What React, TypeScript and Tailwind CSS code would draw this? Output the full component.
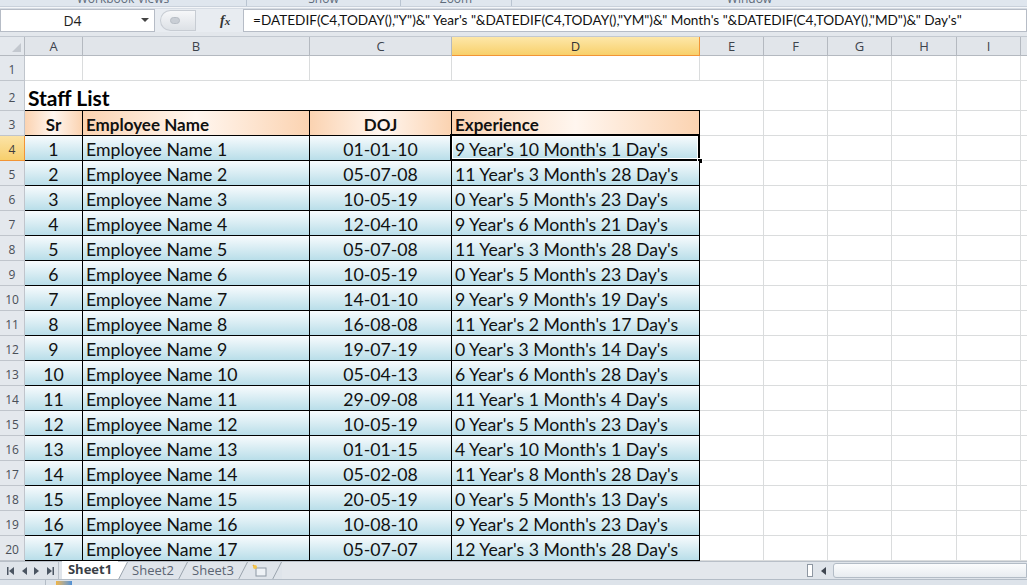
import React from "react";

const COLS = [
  { key: "A", w: "w-[58px]" },
  { key: "B", w: "w-[227px]" },
  { key: "C", w: "w-[142px]" },
  { key: "D", w: "w-[248px]" },
  { key: "E", w: "w-[64px]" },
  { key: "F", w: "w-[64px]" },
  { key: "G", w: "w-[64px]" },
  { key: "H", w: "w-[65px]" },
  { key: "I", w: "w-[64px]" },
  { key: "J", w: "w-[40px]" },
];

const STAFF = [
  ["01-01-10", "9 Year's 10 Month's 1 Day's"],
  ["05-07-08", "11 Year's 3 Month's 28 Day's"],
  ["10-05-19", "0 Year's 5 Month's 23 Day's"],
  ["12-04-10", "9 Year's 6 Month's 21 Day's"],
  ["05-07-08", "11 Year's 3 Month's 28 Day's"],
  ["10-05-19", "0 Year's 5 Month's 23 Day's"],
  ["14-01-10", "9 Year's 9 Month's 19 Day's"],
  ["16-08-08", "11 Year's 2 Month's 17 Day's"],
  ["19-07-19", "0 Year's 3 Month's 14 Day's"],
  ["05-04-13", "6 Year's 6 Month's 28 Day's"],
  ["29-09-08", "11 Year's 1 Month's 4 Day's"],
  ["10-05-19", "0 Year's 5 Month's 23 Day's"],
  ["01-01-15", "4 Year's 10 Month's 1 Day's"],
  ["05-02-08", "11 Year's 8 Month's 28 Day's"],
  ["20-05-19", "0 Year's 5 Month's 13 Day's"],
  ["10-08-10", "9 Year's 2 Month's 23 Day's"],
  ["05-07-07", "12 Year's 3 Month's 28 Day's"],
];

const FORMULA = `=DATEDIF(C4,TODAY(),"Y")&" Year's "&DATEDIF(C4,TODAY(),"YM")&" Month's "&DATEDIF(C4,TODAY(),"MD")&" Day's"`;

const cellFont = "font-['Lato',_'Liberation_Sans',_sans-serif]";
const uiFont = "font-['Open_Sans',_'Liberation_Sans',_sans-serif]";

function RowHead({ n, h, active }: { n: number; h: string; active?: boolean }) {
  return (
    <div
      className={`w-[25px] ${h} shrink-0 flex items-center justify-center pt-[4px] text-[12px] border-r border-b ${
        active
          ? "bg-gradient-to-b from-[#fbe3a6] to-[#f7cf6c] border-[#f29436] text-[#3c3c3c]"
          : "bg-[#e4e8ed] border-[#c0c5cc] text-[#4a4f58]"
      } ${uiFont}`}
    >
      {n}
    </div>
  );
}

function EmptyCells({ from, h }: { from: number; h: string }) {
  return (
    <>
      {COLS.slice(from).map((c) => (
        <div key={c.key} className={`${c.w} ${h} shrink-0 border-r border-b border-[#dadcdd]`} />
      ))}
    </>
  );
}

export default function App() {
  const dataCell =
    "shrink-0 h-[25px] pt-[3px] border-r border-b border-black bg-gradient-to-b from-[#f7fbfd] to-[#b9dee9] flex items-center text-[17.7px] text-[#111] leading-none";
  const headCell =
    "shrink-0 h-[25px] pt-[3px] border-r border-b border-black bg-gradient-to-r from-[#fbd3b1] via-[#fff6ef] to-[#fbd3b1] flex items-center text-[17px] font-bold text-[#111] leading-none";

  return (
    <div className="w-[1027px] h-[585px] overflow-hidden bg-white flex flex-col select-none">
      {/* ribbon group labels, cut off */}
      <div className="h-[6px] shrink-0 overflow-hidden bg-[#dfe6ee] flex text-[12px] text-[#5e6b7a]">
        <div className={`w-[247px] border-r border-[#b9c4d1] text-center -mt-[10px] ${uiFont}`}>Workbook Views</div>
        <div className={`w-[154px] border-r border-[#b9c4d1] text-center -mt-[10px] ${uiFont}`}>Show</div>
        <div className={`w-[111px] border-r border-[#b9c4d1] text-center -mt-[10px] ${uiFont}`}>Zoom</div>
        <div className={`flex-1 text-center -mt-[10px] pr-[40px] ${uiFont}`}>Window</div>
      </div>
      <div className="h-[3px] shrink-0 bg-[#f4f6f9] border-t border-[#c9d1db] border-b border-b-[#d6dce4]" />

      {/* formula bar */}
      <div className="h-[23px] shrink-0 flex bg-[#e8ecf1]">
        <div className="w-[155px] shrink-0 bg-white border border-[#b6bcc6] flex items-center relative">
          <span className={`flex-1 text-center text-[14px] text-[#1e1e1e] pr-[10px] ${uiFont}`}>D4</span>
          <span className="absolute right-[5px] top-[8px] w-0 h-0 border-l-[4px] border-r-[4px] border-t-[4px] border-l-transparent border-r-transparent border-t-[#444]" />
        </div>
        <div className="w-[88px] shrink-0 flex items-center">
          <div className="ml-[5px] w-[36px] h-[21px] rounded-l-full rounded-r-[6px] border border-[#c7ccd3] bg-gradient-to-b from-[#f6f7f9] to-[#dde1e6] flex items-center pl-[9px]">
            <div className="w-[10px] h-[7px] rounded-full bg-[#c9ced5] border border-[#b7bdc5]" />
          </div>
          <span className="ml-[24px] font-['Liberation_Serif',_serif] italic font-bold text-[14px] text-[#333]">
            f<span className="text-[11px]">x</span>
          </span>
        </div>
        <div
          className={`flex-1 bg-white border border-[#b6bcc6] flex items-center pl-[9px] text-[13.6px] text-[#111] whitespace-nowrap overflow-hidden ${cellFont}`}
        >
          {FORMULA}
        </div>
      </div>
      <div className="h-[5px] shrink-0 bg-[#e3e7ec] border-b border-[#c2c8d0]" />

      {/* column headers */}
      <div className="h-[19px] shrink-0 flex">
        <div className="w-[25px] shrink-0 bg-[#e4e8ed] border-r border-b border-[#b4b9c0] flex items-end justify-end p-[3px]">
          <svg width="9" height="9" viewBox="0 0 9 9">
            <path d="M9 0 L9 9 L0 9 Z" fill="#c3c8cf" />
          </svg>
        </div>
        {COLS.map((c) => (
          <div
            key={c.key}
            className={`${c.w} shrink-0 flex items-center justify-center pt-[1px] text-[13px] border-r border-b ${uiFont} ${
              c.key === "D"
                ? "bg-gradient-to-b from-[#fde7a8] to-[#f8d06a] border-[#f29436] text-[#333]"
                : "bg-[#e1e5ea] border-[#b4b9c0] text-[#3d434c]"
            }`}
          >
            {c.key}
          </div>
        ))}
      </div>

      {/* row 1 */}
      <div className="flex">
        <RowHead n={1} h="h-[25px]" />
        <EmptyCells from={0} h="h-[25px]" />
      </div>
      {/* row 2 */}
      <div className="flex">
        <RowHead n={2} h="h-[30px]" />
        <div className="w-[285px] h-[30px] shrink-0 border-b border-black flex items-end pl-[3px] pb-[2px]">
          <span className={`text-[21px] font-bold text-black leading-none ${cellFont}`}>Staff List</span>
        </div>
        <div className="w-[390px] h-[30px] shrink-0 border-b border-black" />
        <EmptyCells from={4} h="h-[30px]" />
      </div>
      {/* row 3 */}
      <div className="flex">
        <RowHead n={3} h="h-[25px]" />
        <div className={`${headCell} w-[58px] justify-center ${cellFont}`}>Sr</div>
        <div className={`${headCell} w-[227px] pl-[3px] ${cellFont}`}>Employee Name</div>
        <div className={`${headCell} w-[142px] justify-center ${cellFont}`}>DOJ</div>
        <div className={`${headCell} w-[248px] pl-[3px] ${cellFont}`}>Experience</div>
        <EmptyCells from={4} h="h-[25px]" />
      </div>
      {STAFF.map(([doj, exp], i) => {
        const row = i + 4;
        const active = row === 4;
        return (
          <div key={row} className="flex">
            <RowHead n={row} h="h-[25px]" active={active} />
            <div className={`${dataCell} w-[58px] justify-center ${cellFont}`}>{i + 1}</div>
            <div className={`${dataCell} w-[227px] pl-[3px] ${cellFont}`}>Employee Name {i + 1}</div>
            <div className={`${dataCell} w-[142px] justify-center ${cellFont}`}>{doj}</div>
            <div className={`${dataCell} w-[248px] pl-[3px] relative ${cellFont}`}>
              {exp}
              {active && (
                <>
                  <span className="absolute -top-[2px] -left-[2px] -right-[1px] -bottom-[1px] border-2 border-black pointer-events-none">
                    <span className="absolute inset-0 border border-white" />
                  </span>
                  <span className="absolute -right-[4px] -bottom-[4px] w-[6px] h-[6px] bg-black border border-white" />
                </>
              )}
            </div>
            <EmptyCells from={4} h="h-[25px]" />
          </div>
        );
      })}

      {/* sheet tabs */}
      <div className="h-[18px] shrink-0 flex bg-[#dfe4ea] border-t border-[#b8bfc8]">
        <div className="w-[58px] shrink-0 flex items-center gap-[7px] pl-[6px] text-[#4b5562]">
          <svg width="8" height="8" viewBox="0 0 8 8"><path d="M1 0h1.5v8H1zM8 0v8L3 4z" fill="currentColor" /></svg>
          <svg width="6" height="8" viewBox="0 0 6 8"><path d="M6 0v8L1 4z" fill="currentColor" /></svg>
          <svg width="6" height="8" viewBox="0 0 6 8"><path d="M0 0v8l5-4z" fill="currentColor" /></svg>
          <svg width="8" height="8" viewBox="0 0 8 8"><path d="M0 0v8l5-4zM5.5 0H7v8H5.5z" fill="currentColor" /></svg>
        </div>
        <div className="w-[4px] border-l border-[#b8bfc8]" />
        <div className={`w-[56px] shrink-0 bg-white -mt-px flex items-center justify-center text-[13px] font-bold text-[#3a3f47] ${uiFont}`}>
          Sheet1
        </div>
        <svg width="10" height="18" viewBox="0 0 10 18" className="shrink-0"><path d="M0 18 L0 0 L1 0 L10 -1 L0 18Z" fill="#fff" /><path d="M0.5 17.5 L9.5 0" stroke="#9aa3ad" /></svg>
        <div className={`w-[50px] shrink-0 flex items-center justify-center text-[13px] text-[#5b6472] ${uiFont}`}>Sheet2</div>
        <svg width="10" height="18" viewBox="0 0 10 18" className="shrink-0"><path d="M0.5 17.5 L9.5 0" stroke="#9aa3ad" /></svg>
        <div className={`w-[50px] shrink-0 flex items-center justify-center text-[13px] text-[#5b6472] ${uiFont}`}>Sheet3</div>
        <svg width="10" height="18" viewBox="0 0 10 18" className="shrink-0"><path d="M0.5 17.5 L9.5 0" stroke="#9aa3ad" /></svg>
        <div className="w-[24px] shrink-0 flex items-center justify-center">
          <svg width="16" height="14" viewBox="0 0 16 14">
            <rect x="4" y="4" width="10" height="8" fill="#eef2f6" stroke="#8e98a4" />
            <path d="M4 4 L1 1" stroke="#e8a431" strokeWidth="1.5" />
            <circle cx="3" cy="3" r="2" fill="#f3c44a" />
          </svg>
        </div>
        <svg width="10" height="18" viewBox="0 0 10 18" className="shrink-0"><path d="M0.5 17.5 L9.5 0" stroke="#9aa3ad" /></svg>
        <div className="flex-1 bg-[#e3e7ec]" />
        <div className="w-[6px] shrink-0 my-[2px] bg-white border border-[#8e97a2]" />
        <div className="w-[20px] shrink-0 flex items-center justify-center">
          <svg width="5" height="8" viewBox="0 0 5 8"><path d="M5 0v8L0 4z" fill="#3f4650" /></svg>
        </div>
        <div className="w-[194px] shrink-0 my-[1px] bg-gradient-to-b from-[#fbfcfd] to-[#e8ecf0] border border-[#b3bcc6] rounded-l-[3px]" />
      </div>
      <div className="flex-1 bg-[#dde3ea] border-t border-[#b3bcc6] flex">
        <div className="w-[46px] border-r border-[#b3bcc6]" />
        <div className="ml-[10px] w-[16px] h-[4px] mt-[1px] bg-gradient-to-r from-[#f0b43c] to-[#4d8fd6]" />
      </div>
    </div>
  );
}
